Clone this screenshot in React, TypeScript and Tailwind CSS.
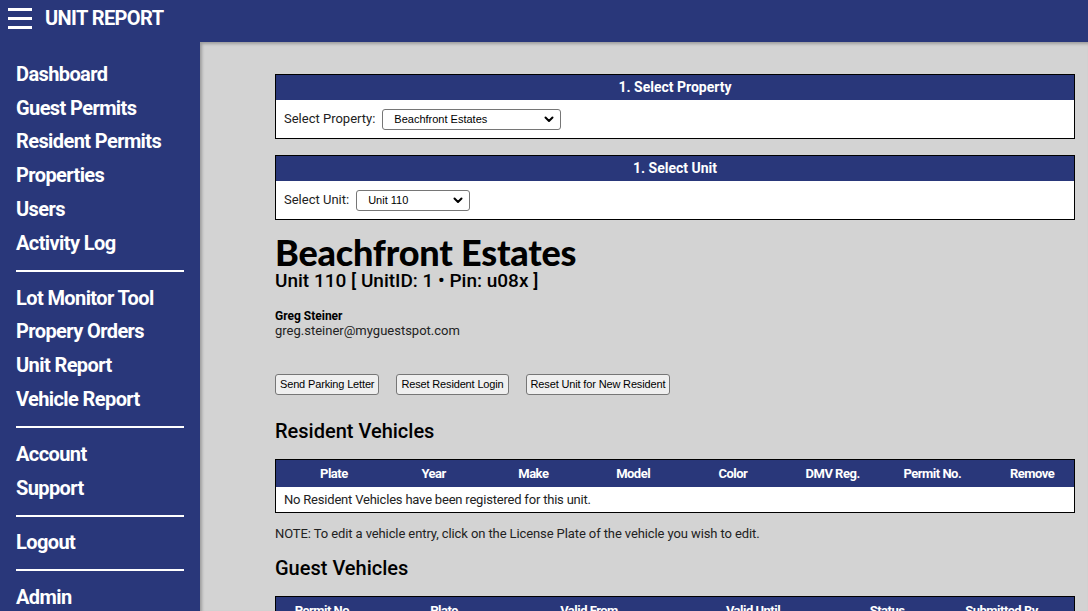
import React from 'react';

const navGroups = [
  ['Dashboard', 'Guest Permits', 'Resident Permits', 'Properties', 'Users', 'Activity Log'],
  ['Lot Monitor Tool', 'Propery Orders', 'Unit Report', 'Vehicle Report'],
  ['Account', 'Support'],
  ['Logout'],
  ['Admin'],
];

const residentCols = ['Plate', 'Year', 'Make', 'Model', 'Color', 'DMV Reg.', 'Permit No.', 'Remove'];

const guestCols = [
  { label: 'Permit No.', w: 'w-[95px]' },
  { label: 'Plate', w: 'w-[146px]' },
  { label: 'Valid From', w: 'w-[144px]' },
  { label: 'Valid Until', w: 'w-[184px]' },
  { label: 'Status', w: 'w-[84px]' },
  { label: 'Submitted By', w: 'flex-1' },
];

function Chevron() {
  return (
    <svg width="12" height="12" viewBox="0 0 12 12" className="shrink-0">
      <path d="M2.5 4.5 L6 8 L9.5 4.5" fill="none" stroke="#000" strokeWidth="2" strokeLinecap="round" strokeLinejoin="round" />
    </svg>
  );
}

function FakeSelect({ value, width }: { value: string; width: string }) {
  return (
    <div className={`${width} h-[21px] flex items-center justify-between bg-white border border-[#767676] rounded-[3px] pl-[11px] pr-[5px] text-[11px] font-['Liberation_Sans',Arial,sans-serif] text-black`}>
      <span>{value}</span>
      <Chevron />
    </div>
  );
}

function Panel({ title, children }: { title: string; children: React.ReactNode }) {
  return (
    <div className="border border-black bg-white">
      <div className="h-[25px] bg-[#29377a] text-white text-[14px] font-bold flex items-center justify-center">{title}</div>
      <div className="h-[38px] flex items-center px-[8px] gap-[7px] text-[13px] text-[#222]">{children}</div>
    </div>
  );
}

function Btn({ children }: { children: React.ReactNode }) {
  return (
    <button className="h-[21px] px-[4px] bg-[#efefef] border border-[#767676] rounded-[3px] text-[11px] text-black font-['Liberation_Sans',Arial,sans-serif] tracking-[-0.15px]">
      {children}
    </button>
  );
}

export default function App() {
  return (
    <div className="w-[1088px] h-[611px] overflow-hidden flex flex-col bg-[#29377a] font-['Roboto',sans-serif]">
      <header className="h-[42px] shrink-0 flex items-center pl-[8px] pb-[6px] gap-[13px]">
        <div className="flex flex-col gap-[6px] w-[24px]">
          <span className="h-[3px] bg-white" />
          <span className="h-[3px] bg-white" />
          <span className="h-[3px] bg-white" />
        </div>
        <span className="text-white text-[20px] font-bold tracking-[-0.6px]">UNIT REPORT</span>
      </header>
      <div className="flex flex-1 min-h-0">
        <nav className="w-[200px] shrink-0 pl-[16px] pr-[16px] pt-[15px]">
          {navGroups.map((g, i) => (
            <div key={i} className={i > 0 ? 'border-t-2 border-white mt-[10px] pt-[9px]' : ''}>
              {g.map((item) => (
                <div key={item} className="h-[33.8px] flex items-center text-white text-[20px] font-bold tracking-[-0.6px]">
                  {item}
                </div>
              ))}
            </div>
          ))}
        </nav>
        <main className="flex-1 bg-[#d3d3d3] shadow-[inset_2px_2px_3px_rgba(0,0,0,0.25)] pl-[75px] pt-[32px] overflow-hidden">
          <div className="w-[800px] flex flex-col">
            <Panel title="1. Select Property">
              <span>Select Property:</span>
              <FakeSelect value="Beachfront Estates" width="w-[179px]" />
            </Panel>
            <div className="h-[16px]" />
            <Panel title="1. Select Unit">
              <span>Select Unit:</span>
              <FakeSelect value="Unit 110" width="w-[114px]" />
            </Panel>
            <h1 className="mt-[12px] text-[36px] leading-[40px] font-black text-black font-['Lato',sans-serif] tracking-[-0.2px]">
              Beachfront Estates
            </h1>
            <div className="text-[19px] leading-[20px] font-medium text-black -mt-[1px]">Unit 110 [ UnitID: 1 • Pin: u08x ]</div>
            <div className="mt-[18px] text-[12px] leading-[14px] font-bold text-black">Greg Steiner</div>
            <div className="text-[13px] leading-[15px] text-[#222]">greg.steiner@myguestspot.com</div>
            <div className="mt-[36px] flex gap-[17px]">
              <Btn>Send Parking Letter</Btn>
              <Btn>Reset Resident Login</Btn>
              <Btn>Reset Unit for New Resident</Btn>
            </div>
            <h2 className="mt-[24px] text-[20px] leading-[24px] font-medium text-black">Resident Vehicles</h2>
            <div className="mt-[16px] border border-black bg-white">
              <div className="h-[27px] bg-[#29377a] flex">
                {residentCols.map((c) => (
                  <div key={c} className="flex-1 pl-[16px] flex items-center justify-center text-white text-[13px] font-bold tracking-[-0.5px]">
                    {c}
                  </div>
                ))}
              </div>
              <div className="h-[25px] flex items-center px-[8px] text-[13px] text-[#222] tracking-[-0.2px]">
                No Resident Vehicles have been registered for this unit.
              </div>
            </div>
            <p className="mt-[13px] text-[13px] leading-[16px] text-[#222] tracking-[-0.1px]">
              NOTE: To edit a vehicle entry, click on the License Plate of the vehicle you wish to edit.
            </p>
            <h2 className="mt-[14px] text-[20px] leading-[24px] font-medium text-black">Guest Vehicles</h2>
            <div className="mt-[16px] border border-black bg-white">
              <div className="h-[27px] bg-[#29377a] flex">
                {guestCols.map((c) => (
                  <div key={c.label} className={`${c.w} flex items-center justify-center text-white text-[13px] font-bold tracking-[-0.5px]`}>
                    {c.label}
                  </div>
                ))}
              </div>
            </div>
          </div>
        </main>
      </div>
    </div>
  );
}
